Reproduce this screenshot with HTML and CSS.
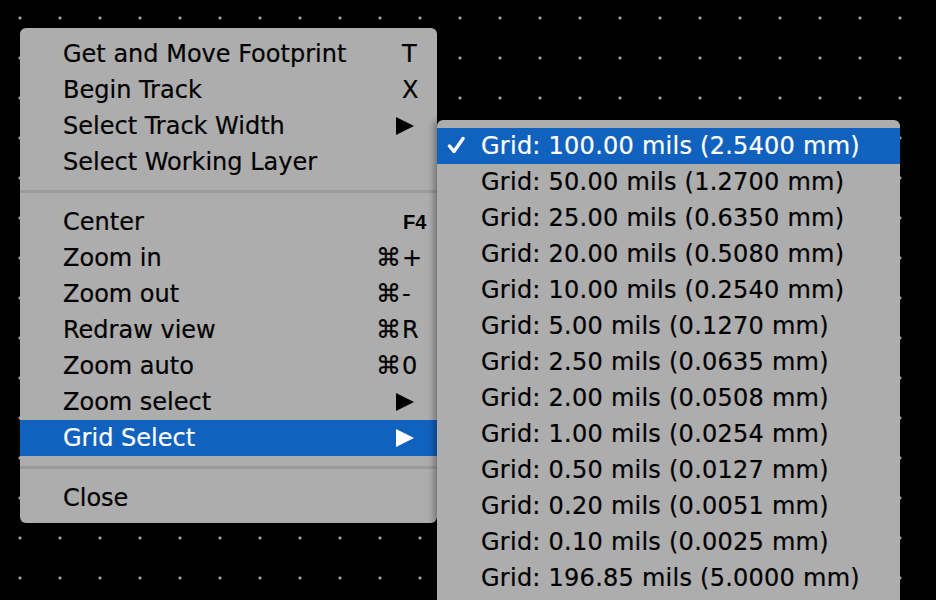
FILE: index.html
```html
<!DOCTYPE html>
<html>
<head>
<meta charset="utf-8">
<link rel="stylesheet" href="styles.css">
</head>
<body>
<div class="canvas">
  <div class="menu main">
    <div class="item"><span class="label">Get and Move Footprint</span><span class="mod"></span><span class="key">T</span></div>
    <div class="item"><span class="label">Begin Track</span><span class="mod"></span><span class="key">X</span></div>
    <div class="item"><span class="label">Select Track Width</span><span class="arrow"></span></div>
    <div class="item"><span class="label">Select Working Layer</span></div>
    <div class="sep"></div>
    <div class="item"><span class="label">Center</span><span class="mod"></span><span class="key fkey">F4</span></div>
    <div class="item"><span class="label">Zoom in</span><span class="mod">⌘</span><span class="key">+</span></div>
    <div class="item"><span class="label">Zoom out</span><span class="mod">⌘</span><span class="key">-</span></div>
    <div class="item"><span class="label">Redraw view</span><span class="mod">⌘</span><span class="key">R</span></div>
    <div class="item"><span class="label">Zoom auto</span><span class="mod">⌘</span><span class="key">0</span></div>
    <div class="item"><span class="label">Zoom select</span><span class="arrow"></span></div>
    <div class="item active"><span class="label">Grid Select</span><span class="arrow"></span></div>
    <div class="sep"></div>
    <div class="item"><span class="label">Close</span></div>
  </div>
  <div class="menu sub">
    <div class="subitem active"><svg class="check" width="18" height="18" viewBox="0 0 18 18"><path d="M2.5 10 L7 15.5 L16 2.5" fill="none" stroke="#fff" stroke-width="3.4" stroke-linecap="round" stroke-linejoin="round"/></svg><span>Grid: 100.00 mils (2.5400 mm)</span></div>
    <div class="subitem"><span>Grid: 50.00 mils (1.2700 mm)</span></div>
    <div class="subitem"><span>Grid: 25.00 mils (0.6350 mm)</span></div>
    <div class="subitem"><span>Grid: 20.00 mils (0.5080 mm)</span></div>
    <div class="subitem"><span>Grid: 10.00 mils (0.2540 mm)</span></div>
    <div class="subitem"><span>Grid: 5.00 mils (0.1270 mm)</span></div>
    <div class="subitem"><span>Grid: 2.50 mils (0.0635 mm)</span></div>
    <div class="subitem"><span>Grid: 2.00 mils (0.0508 mm)</span></div>
    <div class="subitem"><span>Grid: 1.00 mils (0.0254 mm)</span></div>
    <div class="subitem"><span>Grid: 0.50 mils (0.0127 mm)</span></div>
    <div class="subitem"><span>Grid: 0.20 mils (0.0051 mm)</span></div>
    <div class="subitem"><span>Grid: 0.10 mils (0.0025 mm)</span></div>
    <div class="subitem"><span>Grid: 196.85 mils (5.0000 mm)</span></div>
  </div>
</div>
</body>
</html>
```
FILE: styles.css
```css
html, body {
  margin: 0;
  padding: 0;
  background: #000;
}
.canvas {
  position: relative;
  width: 936px;
  height: 600px;
  overflow: hidden;
  background-color: #000;
  background-image: radial-gradient(circle at center, #a8a8a8 0, #a8a8a8 1.3px, rgba(0,0,0,0) 1.8px);
  background-size: 40px 40px;
  background-position: 0 -2px;
  font-family: "DejaVu Sans", "Noto Sans", sans-serif;
  font-size: 24px;
  color: #000;
}
.menu {
  position: absolute;
  background: #adadad;
  box-sizing: border-box;
  -webkit-text-stroke: 0.2px currentColor;
}
.main {
  left: 20px;
  top: 28px;
  width: 417px;
  height: 495px;
  border-radius: 6px;
  padding: 8px 0 7px;
}
.item {
  display: grid;
  grid-template-columns: 1fr 30px 35px;
  align-items: center;
  height: 36px;
  line-height: 36px;
  padding-left: 43px;
  white-space: nowrap;
}
.item .label {
  grid-column: 1;
}
.item .mod {
  grid-column: 2;
  text-align: right;
  font-size: 25px;
  padding-right: 1px;
}
.item .key {
  grid-column: 3;
  text-align: left;
}
.item .fkey {
  font-family: "Liberation Sans", Arial, sans-serif;
  font-weight: bold;
  font-size: 20px;
  padding-left: 1px;
  -webkit-text-stroke: 0;
}
.item .arrow {
  grid-column: 2 / 4;
  justify-self: end;
  margin-right: 23px;
  width: 0;
  height: 0;
  border-left: 18px solid #000;
  border-top: 9px solid transparent;
  border-bottom: 9px solid transparent;
}
.item.active {
  background: #1161be;
  color: #fff;
}
.item.active .arrow {
  border-left-color: #fff;
}
.sep {
  height: 24px;
  box-sizing: border-box;
  padding-top: 10px;
}
.sep::before {
  content: "";
  display: block;
  height: 3px;
  background: #9b9b9b;
}
.sub {
  left: 437px;
  top: 120px;
  width: 463px;
  height: 520px;
  border-radius: 6px 6px 0 0;
  padding-top: 8px;
  box-shadow: -3px 0 6px rgba(0,0,0,0.35);
}
.subitem {
  position: relative;
  height: 36px;
  line-height: 36px;
  padding-left: 44px;
  white-space: nowrap;
  letter-spacing: 0.25px;
}
.subitem.active {
  background: #1161be;
  color: #fff;
}
.check {
  position: absolute;
  left: 10px;
  top: 8px;
}
```
